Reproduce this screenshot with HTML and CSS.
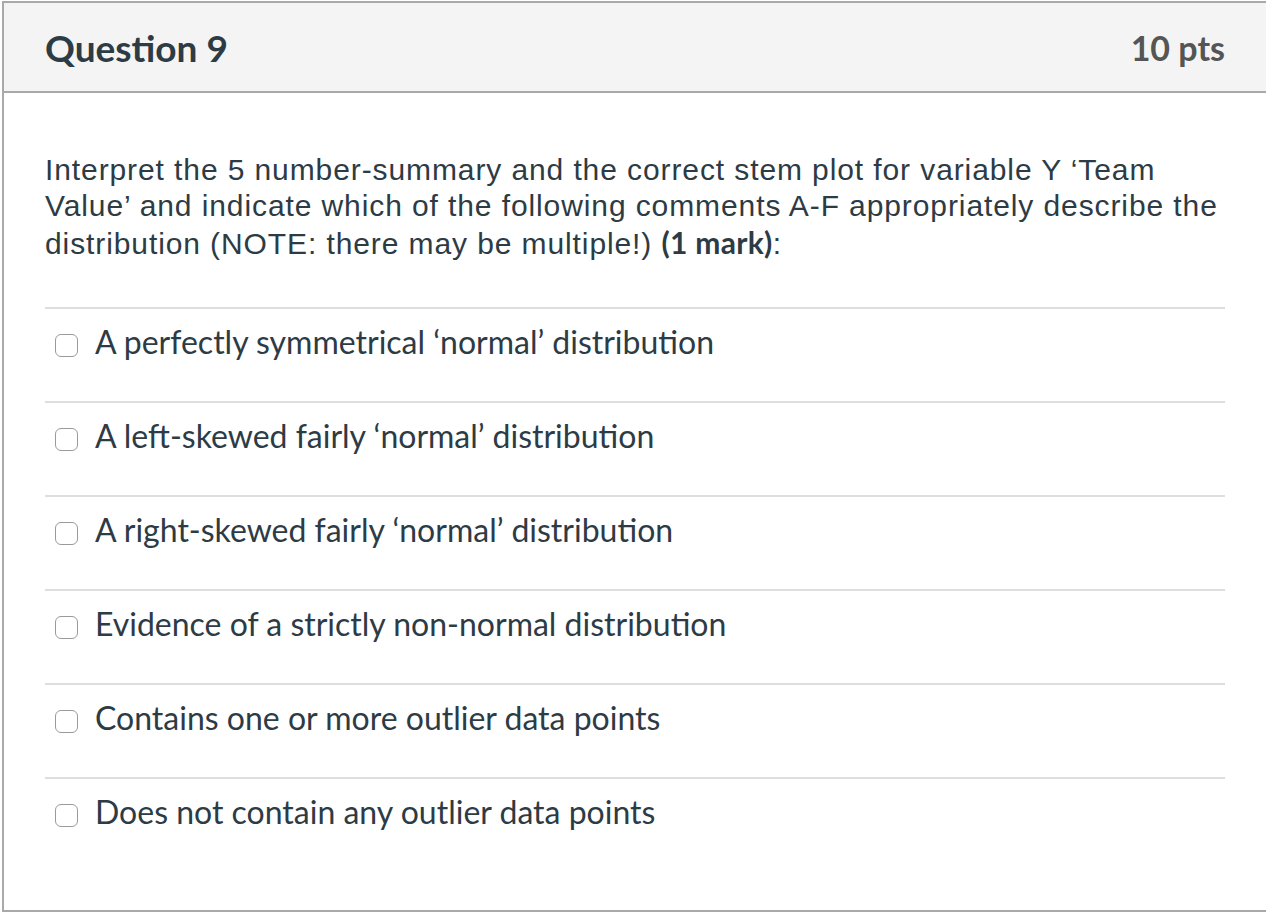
FILE: index.html
```html
<!DOCTYPE html>
<html>
<head>
<meta charset="utf-8">
<link rel="stylesheet" href="styles.css">
</head>
<body>
<div class="panel">
  <div class="header">
    <h2 class="title">Question 9</h2>
    <div class="pts">10 pts</div>
  </div>
  <div class="content">
    <p class="prompt">Interpret the 5 number-summary and the correct stem plot for variable Y ‘Team Value’ and indicate which of the following comments A-F appropriately describe the distribution (NOTE: there may be multiple!) <strong>(1 mark)</strong>:</p>
    <div class="answers">
      <label class="answer"><span class="box"></span><span class="atext">A perfectly symmetrical ‘normal’ distribution</span></label>
      <label class="answer"><span class="box"></span><span class="atext">A left-skewed fairly ‘normal’ distribution</span></label>
      <label class="answer"><span class="box"></span><span class="atext">A right-skewed fairly ‘normal’ distribution</span></label>
      <label class="answer"><span class="box"></span><span class="atext">Evidence of a strictly non-normal distribution</span></label>
      <label class="answer"><span class="box"></span><span class="atext">Contains one or more outlier data points</span></label>
      <label class="answer"><span class="box"></span><span class="atext">Does not contain any outlier data points</span></label>
    </div>
  </div>
</div>
</body>
</html>
```
FILE: styles.css
```css
html, body {
  margin: 0;
  padding: 0;
  background: #fff;
  overflow: hidden;
}
.panel {
  margin: 1px 0 0 2px;
  width: 1264px;
  height: 907px;
  border: 2px solid #a9a9a9;
  background: #fff;
}
.header {
  height: 88px;
  background: #f4f4f4;
  border-bottom: 2px solid #a9a9a9;
  display: flex;
  align-items: center;
  justify-content: space-between;
  padding: 0 43px 0 41px;
}
.title {
  margin: 0;
  font-family: Lato, "Liberation Sans", sans-serif;
  font-weight: 700;
  font-size: 37px;
  color: #2d3b45;
}
.pts {
  font-family: Lato, "Liberation Sans", sans-serif;
  font-weight: 700;
  font-size: 34px;
  color: #555;
}
.content {
  padding: 59px 43px 0 41px;
}
.prompt {
  margin: 0;
  font-family: "Liberation Sans", Arial, sans-serif;
  font-size: 30px;
  letter-spacing: 0.9px;
  line-height: 36px;
  color: #2d3b45;
  width: 1195px;
}
.prompt strong {
  font-family: Lato, "Liberation Sans", sans-serif;
  font-weight: 700;
  letter-spacing: 0.3px;
}
.answers {
  margin-top: 45px;
}
.answer {
  display: flex;
  align-items: flex-start;
  border-top: 2px solid #dedede;
  height: 92px;
}
.box {
  flex: none;
  width: 21px;
  height: 21px;
  border: 1.5px solid #9a9a9a;
  border-radius: 6px;
  margin: 25px 17px 0 10px;
  background: #fff;
}
.atext {
  font-family: Lato, "Liberation Sans", sans-serif;
  font-size: 32px;
  line-height: 36px;
  padding-top: 15px;
  color: #2d3b45;
}
```
